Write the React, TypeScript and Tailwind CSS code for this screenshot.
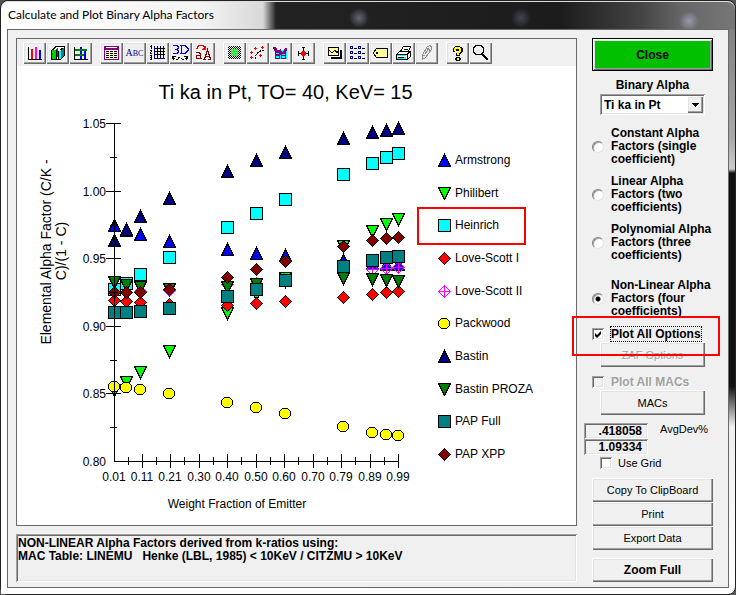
import React from 'react';
import clsx from 'clsx';

type Shape = 'up' | 'down' | 'square' | 'diamond' | 'cross' | 'circle';

interface Series {
  name: string;
  shape: Shape;
  color: string;
  // vertical positions, one for each entry of columns
  points: number[];
}

const columns = [114, 126, 140, 169, 227, 256, 285, 343, 372, 386, 398];

const series: Series[] = [
  { name: 'Armstrong', shape: 'up', color: '#0000ff', points: [225, 230, 234, 241, 249, 253, 255, 260, 263, 264, 264] },
  { name: 'Philibert', shape: 'down', color: '#00ff00', points: [390, 382, 372, 351, 313, 294, 278, 246, 231, 224, 219] },
  { name: 'Heinrich', shape: 'square', color: '#00ffff', points: [289, 283, 274, 257, 227, 213, 199, 174, 163, 157, 153] },
  { name: 'Love-Scott I', shape: 'diamond', color: '#ff0000', points: [300, 301, 302, 304, 305, 303, 301, 297, 294, 292, 291] },
  { name: 'Love-Scott II', shape: 'cross', color: '#ff00ff', points: [292, 292, 291, 290, 284, 283, 281, 272, 269, 268, 267] },
  { name: 'Packwood', shape: 'circle', color: '#ffff00', points: [386, 387, 389, 393, 402, 407, 413, 426, 432, 434, 435] },
  { name: 'Bastin', shape: 'up', color: '#000080', points: [240, 229, 216, 198, 171, 160, 152, 138, 132, 130, 128] },
  { name: 'Bastin PROZA', shape: 'down', color: '#008000', points: [282, 285, 287, 289, 287, 284, 281, 278, 279, 280, 281] },
  { name: 'PAP Full', shape: 'square', color: '#008080', points: [312, 312, 311, 308, 296, 289, 280, 266, 260, 257, 256] },
  { name: 'PAP XPP', shape: 'diamond', color: '#800000', points: [292, 292, 292, 289, 277, 269, 261, 246, 240, 238, 237] },
];

const yTicks = [
  { y: 123, label: '1.05' },
  { y: 191, label: '1.00' },
  { y: 258, label: '0.95' },
  { y: 326, label: '0.90' },
  { y: 393, label: '0.85' },
  { y: 461, label: '0.80' },
];

const xTicks = [
  { x: 114, label: '0.01' },
  { x: 142, label: '0.11' },
  { x: 170, label: '0.21' },
  { x: 199, label: '0.30' },
  { x: 227, label: '0.40' },
  { x: 256, label: '0.50' },
  { x: 284, label: '0.60' },
  { x: 313, label: '0.70' },
  { x: 341, label: '0.79' },
  { x: 370, label: '0.89' },
  { x: 398, label: '0.99' },
];

const raised = 'bg-[#f0f0f0] shadow-[inset_1px_1px_#fff,inset_-1px_-1px_#696969,inset_-2px_-2px_#a0a0a0,inset_2px_2px_#e3e3e3]';
const sunken = 'shadow-[inset_1px_1px_#a0a0a0,inset_-1px_-1px_#fff,inset_2px_2px_#696969,inset_-2px_-2px_#e3e3e3]';

const Marker = ({ shape, color, x, y }: { shape: Shape; color: string; x: number; y: number }) => (
  <g transform={`translate(${x} ${y})`} fill={color} stroke="#000" strokeWidth="1" shapeRendering="crispEdges">
    {shape === 'up' && <path d="M0.5 -5.5L6.5 6.5H-5.5Z" />}
    {shape === 'down' && <path d="M0.5 6.5L6.5 -5.5H-5.5Z" />}
    {shape === 'square' && <rect x="-5.5" y="-5.5" width="12" height="12" />}
    {shape === 'diamond' && <path d="M0.5 -5.5L6.5 0.5L0.5 6.5L-5.5 0.5Z" />}
    {shape === 'cross' && <path d="M0.5 -5.5L6.5 0.5L0.5 6.5L-5.5 0.5ZM0.5 -5.5V6.5M-5.5 0.5H6.5" fill="none" stroke={color} />}
    {shape === 'circle' && <circle cx="0" cy="0.5" r="5.5" />}
  </g>
);

const PlotArea = () => (
  <svg
    viewBox="17 112 400 406"
    width="400"
    height="406"
    className="shrink-0"
    fontFamily="Liberation Sans, Arial, sans-serif"
    fontSize="12"
    role="img"
    aria-label="Alpha factor against weight fraction of emitter"
  >
    {series.map((s) =>
      s.points.map((y, i) => <Marker key={s.name + i} shape={s.shape} color={s.color} x={columns[i]} y={y} />)
    )}
    <g fill="#000" shapeRendering="crispEdges">
      <rect x="114" y="123" width="1" height="339" />
      <rect x="114" y="461" width="285" height="1" />
      {yTicks.map((t, i) => (
        <React.Fragment key={t.y}>
          {i < 5 && <rect x="106" y={t.y} width="15" height="1" />}
          {i < 5 && <rect x="110" y={t.y + 34} width="7" height="1" />}
        </React.Fragment>
      ))}
      {xTicks.map((t, i) => (
        <React.Fragment key={t.x}>
          {i > 0 && <rect x={t.x} y="454" width="1" height="14" />}
          {i < 10 && <rect x={t.x + 14} y="457" width="1" height="8" />}
        </React.Fragment>
      ))}
    </g>
    {yTicks.map((t) => (
      <text key={t.label} x="106" y={t.y + 5} textAnchor="end">{t.label}</text>
    ))}
    {xTicks.map((t) => (
      <text key={t.label} x={t.x} y="481" textAnchor="middle">{t.label}</text>
    ))}
    <text x="237" y="508" textAnchor="middle">Weight Fraction of Emitter</text>
    <g transform="rotate(-90)" fontSize="14" textAnchor="middle">
      <text x="-252" y="51">Elemental Alpha Factor (C/K -</text>
      <text x="-251" y="66">C)/(1 - C)</text>
    </g>
  </svg>
);

/* Toolbar glyphs, all on a 23 x 22 grid */

const icons: Record<string, React.ReactNode> = {
  gallery: (
    <>
      <path d="M5 5h1v12h13v1H5z" />
      <path fill="#f00" d="M8 7h2v10H8z" />
      <path fill="#f0f" d="M12 5h2v12h-2z" />
      <path fill="#00f" d="M16 8h2v9h-2z" />
    </>
  ),
  view3d: (
    <>
      <path fill="#fff" stroke="#000" d="M5.500 8.500l4-4h9v9l-4 4h-9z" />
      <path fill="#006400" d="M9 8l3-3v9l-3 3z" />
      <path fill="#0c0" d="M6 8h4v9H6z" />
      <path d="M6 8l3-3h1L8 8zM10 8h1v9h-1z" />
      <path fill="#008080" d="M15 9l2-3h1v7l-3 4z" />
      <path fill="#0ff" d="M13 9h2v8h-2z" />
      <path d="M12 9h1v8h-1zM13 8l2-2h2l-2 2z" />
    </>
  ),
  rotate: (
    <>
      <path d="M5 5h1v12h13v1H5z" />
      <path fill="#00f" d="M11 5h2v12h-2zM15 8h2v9h-2z" />
      <path fill="#008000" d="M6 7h12v2H6zM6 12h9v2H6z" />
    </>
  ),
  table: (
    <>
      <path fill="#800080" d="M4 4h15v14H4z" />
      <path fill="#ffffc0" d="M5 8h13v9H5z" />
      <path fill="#fff" d="M6 5h11v1H6z" />
      <path d="M6 9h3v1H6zM10 9h3v1h-3zM14 9h3v1h-3zM6 11h3v1H6zM10 11h3v1h-3zM14 11h3v1h-3zM6 13h3v1H6zM10 13h3v1h-3zM14 13h3v1h-3zM6 15h3v1H6zM10 15h3v1h-3zM14 15h3v1h-3z" />
    </>
  ),
  grid: (
    <>
      <path d="M11 4h1v13h-1zM14 4h1v13h-1zM17 4h1v13h-1zM8 6h11v1H8zM8 9h11v1H8zM8 12h11v1H8z" />
      <path fill="#000080" d="M8 4h1v13H8zM8 16h11v1H8z" />
      <path d="M5 3h1v4H5zM4 4h1v1H4zM4 8h2v2H5v1h1v1H4v-2h1V9H4zM4 13h2v5H4v-1h1v-1H4v-1h1v-1H4z" />
    </>
  ),
  threeD: (
    <>
      <path fill="none" stroke="#00f" d="M4 3.500h4l1 1v2l-1 1H6h2l1 1v2l-1 1H4M12.500 3v9M11 3.500h5l3 3v2l-3 3h-5" />
      <path d="M3 14h4v1H5v1h1v1H5v1H4v-1H3zM19 14h-4v1h2v1h-1v1h1v1h1v-1h1z" />
      <path d="M7 17h2v1H7zM9 16h1v1H9zM9 15h2v1H9zM12 16h1v1h-1zM13 17h2v1h-2z" />
    </>
  ),
  fonts: (
    <>
      <path fill="none" stroke="#f00" d="M4 6.500h1.500V5L7 3.500h4l2 2" />
      <path fill="#f00" d="M14 3v5H9l2-2 1-1z" />
      <path fill="none" stroke="#800000" d="M4 10.500h3l1 1v5h2M8 13.500H5l-1 1v1l1 1h3M11 17.500h2.500M16 17.500h3M12.500 17l3-9 3 9M13 14.500h4" />
    </>
  ),
  pattern: (
    <>
      <path fill="url(#dotsBlack)" d="M5 4h13v13H5z" />
      <path fill="#fff" d="M8 7h7v7H8z" />
      <path fill="#7dea8b" d="M8 7h7v7H8z" />
      <path fill="url(#dotsGreen)" d="M8 7h7v7H8z" />
    </>
  ),
  fit: (
    <>
      <path fill="none" stroke="#000" strokeDasharray="2 1" d="M9.500 17v-3l2-3 3-2 4-1" />
      <path fill="none" stroke="#f00" d="M4 10.500h3M5.500 9v3M8 6.500h3M9.500 5v3M15 5.500h3M16.500 4v3M4 15.500h3M5.500 14v3M13 13.500h3M14.500 12v3" />
    </>
  ),
  curves: (
    <>
      <path fill="#0ff" d="M6 8h12v9H6z" />
      <path fill="#800080" d="M4 5h3v1h1v2h3V7h1v2h1v1h1V9h1V7h1V6h2v3h-1v8h-5v-4h-1v4H6V9H5V7H4z" />
      <path fill="#0ff" d="M7 11h3v1H7zM7 14h3v2H7zM13 12h3v1h-3zM13 14h3v2h-3z" />
    </>
  ),
  crosshair: (
    <>
      <path d="M11 6h1v11h-1zM7 11h10v1H7zM6 9h1v5H6zM16 9h1v5h-1zM10 5h3v1h-3zM10 17h3v1h-3z" />
      <path fill="#f00" d="M10 9h3v1h1v3h-1v1h-3v-1H9v-3h1z" />
    </>
  ),
  titles: (
    <>
      <path d="M8 8h11v9H8z" />
      <path fill="#ff9" stroke="#000" d="M5.500 5.500h10v8h-10z" />
      <path fill="none" stroke="#000" d="M6 8l3 3 3-3 2 3 2-3" />
      <path fill="#fff" d="M16 6h1v9h-1zM7 14h10v1H7z" />
    </>
  ),
  legend: (
    <>
      <path fill="none" stroke="#0000a0" d="M4.500 4.500h2v2h-2zM4.500 9.500h2v2h-2zM4.500 14.500h2v2h-2zM12.500 4.500h2v2h-2zM12.500 9.500h2v2h-2zM12.500 14.500h2v2h-2z" />
      <path d="M8 6h3v1H8zM8 11h3v1H8zM8 16h3v1H8zM16 6h3v1h-3zM16 11h3v1h-3zM16 16h3v1h-3z" />
    </>
  ),
  tag: (
    <>
      <path fill="#ff9" stroke="#000" d="M4.500 10.500l3-4h11v9h-11l-3-4z" />
      <path fill="#fff" stroke="#000" d="M7.500 10.500h1v1h-1z" />
    </>
  ),
  printer: (
    <>
      <path fill="#fff" stroke="#000" d="M8.500 9.500l3-5h7l-2 5z" />
      <path fill="#fff" stroke="#000" d="M4.500 12.500l3-3h11v5l-3 3h-11z" />
      <path fill="#0ff" d="M5 13h9v1H5zM5 15h9v2H5z" />
      <path fill="none" stroke="#000" d="M15.500 17v-5l3-3M5 12.500h10M12 7.500h4M6 15.500h6" />
    </>
  ),
  pencil: (
    <>
      <path fill="#e8e8e8" stroke="#909090" d="M7.500 17.500v-5l5-8 3-1 1 2v2l-6 8z" />
      <path fill="none" stroke="#909090" d="M7.500 12.500l3 2M11.500 6.500l4 2M10 12l4-6" />
    </>
  ),
  help: (
    <>
      <path d="M9 4h5v1h2v1h1v4h-1v1h-1v1h-1v2h-4v-3h1v-1h1V9H9v1H7V6h1V5h1zM10 15h4v1h1v2h-1v1h-4v-1H9v-2h1z" />
      <path fill="#ff0" d="M9 5h5v1h1v4h-1v1h-1v2h-2v-3h1V9h1V7h-3v2H8V6h1zM11 16h2v2h-2z" />
    </>
  ),
  zoom: (
    <>
      <path fill="none" stroke="#000" strokeWidth="1" d="M7.500 3.500h4l2 1 1 2v3l-1 2-2 1h-4l-2-1-1-2v-3l1-2z" />
      <path d="M13 12h2v1h1v1h1v1h1v1h1v2h-2v-1h-1v-1h-1v-1h-1v-1h-1z" />
    </>
  ),
};

const toolGroups = [
  ['gallery', 'view3d', 'rotate'],
  ['table', 'abc', 'grid', 'threeD', 'fonts'],
  ['pattern', 'fit', 'curves', 'crosshair'],
  ['titles', 'legend', 'tag', 'printer', 'pencil'],
  ['help', 'zoom'],
];

const Toolbar = () => (
  <div className="flex h-[27px] items-center gap-2 bg-[#f0f0f0] pl-1.5">
    {toolGroups.map((group) => (
      <div key={group[0]} className="flex">
        {group.map((name) => (
          <button key={name} type="button" aria-label={name} className={clsx('flex h-[22px] w-[23px] items-center justify-center', raised)}>
            {name === 'abc' ? (
              <span className="font-['Liberation_Serif',serif] text-[10px] leading-none text-[#000080]">
                A<span className="text-[8px]">BC</span>
              </span>
            ) : (
              <svg viewBox="0 0 23 22" width="23" height="22" shapeRendering="crispEdges">{icons[name]}</svg>
            )}
          </button>
        ))}
      </div>
    ))}
    <svg width="0" height="0" className="absolute" aria-hidden="true">
      <defs>
        <pattern id="dotsBlack" width="2" height="2" patternUnits="userSpaceOnUse">
          <path d="M0 0h1v1H0zM1 1h1v1H1z" />
        </pattern>
        <pattern id="dotsGreen" width="2" height="2" patternUnits="userSpaceOnUse">
          <path fill="#0f0" d="M0 0h1v1H0zM1 1h1v1H1z" />
        </pattern>
      </defs>
    </svg>
  </div>
);

const Legend = () => (
  <ul className="ml-5 mt-10 flex h-[310px] flex-col justify-between">
    {series.map((s) => (
      <li key={s.name} className="relative flex h-4 items-center gap-1 text-[12px] leading-4 whitespace-nowrap">
        <svg viewBox="-7 -7 14 14" width="14" height="14">
          <Marker shape={s.shape} color={s.color} x={0} y={0} />
        </svg>
        {s.name}
        {s.name === 'Heinrich' && (
          <span className="pointer-events-none absolute -top-2.5 -left-5 h-[38px] w-[109px] border-2 border-[#f00]" />
        )}
      </li>
    ))}
  </ul>
);

const factorOptions = [
  { id: 'constant', text: 'Constant Alpha Factors (single coefficient)' },
  { id: 'linear', text: 'Linear Alpha Factors (two coefficients)' },
  { id: 'polynomial', text: 'Polynomial Alpha Factors (three coefficients)' },
  { id: 'nonlinear', text: 'Non-Linear Alpha Factors (four coefficients)' },
];

const Check = ({ id, checked, disabled }: { id: string; checked?: boolean; disabled?: boolean }) => (
  <span className="relative size-3 shrink-0">
    <input
      id={id}
      type="checkbox"
      defaultChecked={checked}
      disabled={disabled}
      className={clsx('peer block size-3 appearance-none disabled:bg-[#f0f0f0]', sunken, !disabled && 'bg-white')}
    />
    <svg viewBox="0 0 12 12" width="12" height="12" className="pointer-events-none absolute inset-0 hidden peer-checked:block">
      <path d="M3 5v3l2 2 4-4V3L5 7z" />
    </svg>
  </span>
);

const PushButton = ({ children, className, disabled }: { children: React.ReactNode; className?: string; disabled?: boolean }) => (
  <button
    type="button"
    disabled={disabled}
    className={clsx('text-[11px] disabled:text-[#a0a0a0] disabled:[text-shadow:1px_1px_#fff]', raised, className)}
  >
    {children}
  </button>
);

const ControlPanel = () => (
  <aside className="flex w-[121px] shrink-0 flex-col text-[11px] leading-4">
    <button
      type="button"
      className="h-[33px] border border-black bg-[#00c000] text-[12px] font-bold shadow-[inset_1px_1px_#fff,inset_-1px_-1px_#696969,inset_2px_2px_#e3e3e3,inset_-2px_-2px_#a0a0a0]"
    >
      Close
    </button>
    <label htmlFor="pair" className="mt-1.5 h-[17px] text-center text-[12px] font-bold">Binary Alpha</label>
    <div className="relative mx-2">
      <select id="pair" className={clsx('block h-[21px] w-full appearance-none bg-white pl-1 text-[12px] font-bold', sunken)}>
        <option>Ti ka in Pt</option>
      </select>
      <span className={clsx('pointer-events-none absolute top-0.5 right-0.5 flex h-[17px] w-4 items-center justify-center', raised)}>
        <svg viewBox="0 0 7 4" width="7" height="4" shapeRendering="crispEdges"><path d="M0 0h7v1H6v1H5v1H4v1H3V3H2V2H1V1H0z" /></svg>
      </span>
    </div>

    <fieldset className="mt-3 flex flex-col gap-[9px]">
      {factorOptions.map((o) => (
        <label key={o.id} className="-mr-3 flex items-center gap-[7px] text-[12px] leading-[13px] font-bold last:mt-2">
          <input
            type="radio"
            name="factors"
            defaultChecked={o.id === 'nonlinear'}
            className="size-3 shrink-0 appearance-none rounded-full border border-t-[#808080] border-r-[#e3e3e3] border-b-[#e3e3e3] border-l-[#808080] bg-white shadow-[inset_1px_1px_#a0a0a0] checked:bg-[radial-gradient(circle,#000_2px,#fff_3px)]"
          />
          {o.text}
        </label>
      ))}
    </fieldset>

    <div className="relative mt-2 flex h-4 items-center gap-1.5">
      <Check id="plot-all" checked />
      <label htmlFor="plot-all" className="border border-dotted border-black text-[12px] leading-[14px] font-bold whitespace-nowrap">Plot All Options</label>
      <span className="pointer-events-none absolute -top-2.5 -left-5 z-10 h-10 w-[148px] border-2 border-[#f00]" />
    </div>
    <PushButton disabled className="mx-2 h-[25px]">ZAF Options</PushButton>

    <div className="mt-[7px] flex h-4 items-center gap-[7px]">
      <Check id="plot-macs" disabled />
      <label htmlFor="plot-macs" className="text-[12px] font-bold text-[#a0a0a0] [text-shadow:1px_1px_#fff]">Plot All MACs</label>
    </div>
    <PushButton className="mx-2 h-[25px]">MACs</PushButton>

    <div className="mt-2 -ml-2 flex gap-3">
      <div className="flex w-16 shrink-0 flex-col text-right text-[12px] font-bold">
        <output className={clsx('h-4 pr-1.5', sunken)}>.418058</output>
        <output className={clsx('h-4 pr-1.5', sunken)}>1.09334</output>
      </div>
      <span className="leading-3">AvgDev%</span>
    </div>
    <div className="flex h-4 items-center gap-1.5 pl-2">
      <Check id="use-grid" />
      <label htmlFor="use-grid">Use Grid</label>
    </div>

    <PushButton className="mt-[7px] h-6">Copy To ClipBoard</PushButton>
    <PushButton className="h-6">Print</PushButton>
    <PushButton className="h-6">Export Data</PushButton>
    <button type="button" className={clsx('mt-2 h-6 text-[12px] font-bold', raised)}>Zoom Full</button>
  </aside>
);

const App = () => {
  return (
    <div className="bg-[#555] font-['Liberation_Sans',Arial,sans-serif] text-black">
      <div className="flex min-h-screen flex-col rounded-lg border border-[#222] bg-[linear-gradient(to_bottom,#777_0,#aaa_140px,#ccc_168px,#111_172px,#111_385px,#eee_425px,#fff_100%)] shadow-[inset_0_1px_#ddd]">
        <header className="flex h-7 items-center rounded-t-lg bg-[radial-gradient(circle_at_358px_17px,#667_0,transparent_10px),radial-gradient(circle_at_520px_17px,#445_0,transparent_10px),radial-gradient(circle_at_688px_20px,#99a_0,transparent_10px),linear-gradient(to_right,#fff_0,#f4f4f4_200px,#d8d8d8_262px,#222_275px,#1c1c1c_560px,#444_640px,#666_680px,#777_100%)] bg-no-repeat pl-[7px] shadow-[inset_0_1px_#ddd]">
          <h1 className="font-[Lato,'Open_Sans',sans-serif] text-[12px]">Calculate and Plot Binary Alpha Factors</h1>
        </header>
        <div className="flex flex-1 bg-[linear-gradient(to_right,#fff_50%,transparent_50%)] pb-1.5">
          <main className="mx-1.5 flex flex-1 gap-[15px] border border-[#696969] bg-[#f0f0f0] pt-2 pr-[15px] pb-1 pl-2">
            <div className="flex min-w-0 flex-1 flex-col">
              <section className="border border-[#696969] bg-white pb-[7px]">
                <Toolbar />
                <h2 className="mt-3.5 pr-[22px] text-center text-[20px] leading-6">Ti ka in Pt, TO= 40, KeV= 15</h2>
                <div className="mt-2 flex">
                  <PlotArea />
                  <Legend />
                </div>
              </section>
              <p className={clsx('mt-2 h-12 px-0.5 py-[3px] text-[12px] leading-[13px] font-bold', sunken)}>
                NON-LINEAR Alpha Factors derived from k-ratios using:
                <br />
                MAC Table: LINEMU &nbsp; Henke (LBL, 1985) &lt; 10KeV / CITZMU &gt; 10KeV
              </p>
            </div>
            <ControlPanel />
          </main>
        </div>
      </div>
    </div>
  );
};

export default App;
